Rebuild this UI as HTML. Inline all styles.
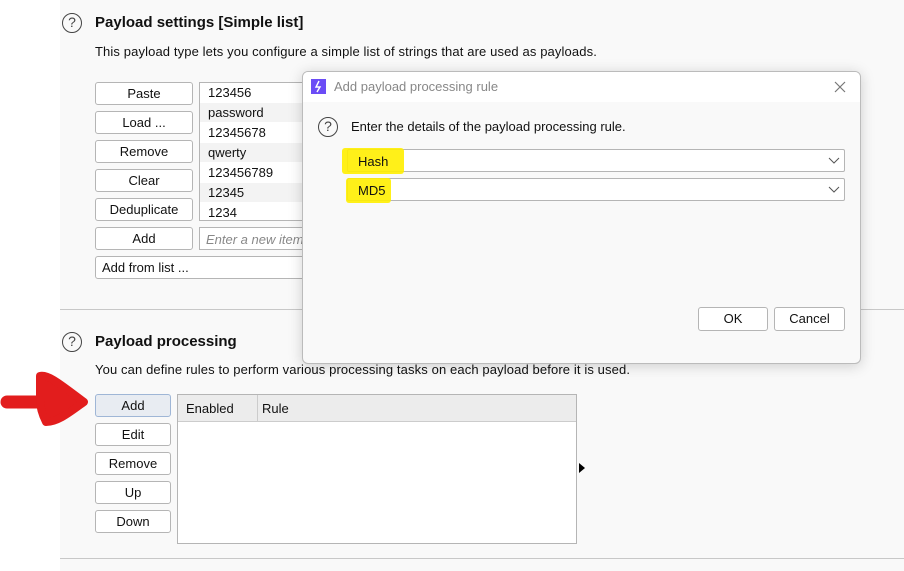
<!DOCTYPE html>
<html><head><style>
body{margin:0;width:904px;height:571px;position:relative;overflow:hidden;background:#fff;font-family:"Liberation Sans",sans-serif;font-size:13px;color:#111}
.a{position:absolute}
.panel{left:60px;top:0;width:844px;height:571px;background:#f9f9f9}
.hr{height:1px;background:#c8c8c8;left:60px;width:844px}
.btn{position:absolute;background:#fff;border:1px solid #b5b5b5;border-radius:3px;box-sizing:border-box;text-align:center;line-height:21px;font-size:13px}
.help{position:absolute;width:20px;height:20px;border:1.6px solid #444;border-radius:50%;box-sizing:border-box;text-align:center;font-size:14px;line-height:17px;color:#444}
.h{font-weight:bold;font-size:15px}
.li{position:absolute;left:208px;font-size:13px}
.combo{position:absolute;left:347px;width:498px;height:23px;border:1px solid #b5b5b5;border-radius:2px;background:#fff;box-sizing:border-box}
.hl{position:absolute;background:#ffee00;border-radius:3px}
</style></head><body>
<div class="a panel"></div>
<div class="a hr" style="top:309px"></div>
<div class="a hr" style="top:558px"></div>

<div class="help" style="left:62px;top:13px">?</div>
<div class="a h" style="left:95px;top:14px">Payload settings [Simple list]</div>
<div class="a" style="left:95px;top:44px;letter-spacing:0.12px">This payload type lets you configure a simple list of strings that are used as payloads.</div>

<div class="btn" style="left:95px;top:82px;width:98px;height:23px">Paste</div>
<div class="btn" style="left:95px;top:111px;width:98px;height:23px">Load ...</div>
<div class="btn" style="left:95px;top:140px;width:98px;height:23px">Remove</div>
<div class="btn" style="left:95px;top:169px;width:98px;height:23px">Clear</div>
<div class="btn" style="left:95px;top:198px;width:98px;height:23px">Deduplicate</div>
<div class="btn" style="left:95px;top:227px;width:98px;height:23px">Add</div>
<div class="a" style="left:199px;top:82px;width:120px;height:139px;border:1px solid #b5b5b5;background:#fff;box-sizing:border-box"></div>
<div class="a" style="left:200px;top:103px;width:110px;height:19px;background:#f3f3f3"></div>
<div class="a" style="left:200px;top:143px;width:110px;height:19px;background:#f3f3f3"></div>
<div class="a" style="left:200px;top:183px;width:110px;height:19px;background:#f3f3f3"></div>
<div class="li" style="top:85px">123456</div>
<div class="li" style="top:105px">password</div>
<div class="li" style="top:125px">12345678</div>
<div class="li" style="top:145px">qwerty</div>
<div class="li" style="top:165px">123456789</div>
<div class="li" style="top:185px">12345</div>
<div class="li" style="top:205px">1234</div>
<div class="a" style="left:199px;top:227px;width:120px;height:23px;border:1px solid #b5b5b5;background:#fff;box-sizing:border-box;color:#888;font-style:italic;padding:4px 6px">Enter a new item</div>
<div class="a" style="left:95px;top:256px;width:230px;height:23px;border:1px solid #b5b5b5;border-radius:3px;background:#fff;box-sizing:border-box;padding:3px 6px">Add from list ...</div>

<div class="help" style="left:62px;top:332px">?</div>
<div class="a h" style="left:95px;top:333px">Payload processing</div>
<div class="a" style="left:95px;top:362px;letter-spacing:0.12px">You can define rules to perform various processing tasks on each payload before it is used.</div>
<div class="btn" style="left:95px;top:394px;width:76px;height:23px;background:#e8ecf2;border-color:#9fb6d6">Add</div>
<div class="btn" style="left:95px;top:423px;width:76px;height:23px">Edit</div>
<div class="btn" style="left:95px;top:452px;width:76px;height:23px">Remove</div>
<div class="btn" style="left:95px;top:481px;width:76px;height:23px">Up</div>
<div class="btn" style="left:95px;top:510px;width:76px;height:23px">Down</div>
<div class="a" style="left:177px;top:394px;width:400px;height:150px;border:1px solid #b5b5b5;background:#fff;box-sizing:border-box">
<div class="a" style="left:0;top:0;width:398px;height:26px;background:#ececec;border-bottom:1px solid #ccc"></div>
<div class="a" style="left:79px;top:0;width:1px;height:26px;background:#ccc"></div>
<div class="a" style="left:8px;top:6px">Enabled</div>
<div class="a" style="left:84px;top:6px">Rule</div>
</div>
<svg class="a" style="left:578px;top:462px" width="8" height="12"><path d="M1 1L7 6L1 11Z" fill="#000"/></svg>

<svg class="a" style="left:0;top:360px" width="95" height="70"><path d="M7 42L42 42" stroke="#e21d1d" stroke-width="13" stroke-linecap="round"/><path d="M40 16C48 14 60 24 84 42C70 52 58 62 46 62C42 54 40 46 40 40Z" stroke="#e21d1d" stroke-width="8" stroke-linejoin="round" fill="#e21d1d"/></svg>

<div class="a" style="left:302px;top:71px;width:559px;height:293px;background:#f9f9f9;border:1px solid #bbb;border-radius:6px;box-sizing:border-box;box-shadow:0 2px 14px rgba(0,0,0,.18);overflow:hidden">
<div class="a" style="left:0;top:0;width:559px;height:30px;background:#fff"></div>
<div class="a" style="left:8px;top:7px;width:15px;height:15px;background:#6b4cf6"></div>
<svg class="a" style="left:8px;top:7px" width="15" height="15"><path d="M8 2L5 8L9 8L6 13" stroke="#fff" stroke-width="1.4" fill="none"/></svg>
<div class="a" style="left:31px;top:7px;color:#888">Add payload processing rule</div>
<svg class="a" style="left:530px;top:8px" width="14" height="14"><path d="M2 2L12 12M12 2L2 12" stroke="#777" stroke-width="1.2"/></svg>
</div>
<div class="help" style="left:318px;top:117px">?</div>
<div class="a" style="left:351px;top:119px">Enter the details of the payload processing rule.</div>
<div class="combo" style="top:149px"></div>
<div class="combo" style="top:178px"></div>
<div class="hl" style="left:342px;top:148px;width:62px;height:26px;opacity:.9"></div>
<div class="hl" style="left:346px;top:178px;width:45px;height:25px;opacity:.9"></div>
<div class="a" style="left:358px;top:154px">Hash</div>
<div class="a" style="left:358px;top:183px">MD5</div>
<svg class="a" style="left:828px;top:157px" width="12" height="8"><path d="M1 1L6 6L11 1" stroke="#555" fill="none"/></svg>
<svg class="a" style="left:828px;top:186px" width="12" height="8"><path d="M1 1L6 6L11 1" stroke="#555" fill="none"/></svg>
<div class="btn" style="left:698px;top:307px;width:70px;height:24px">OK</div>
<div class="btn" style="left:774px;top:307px;width:71px;height:24px">Cancel</div>
</body></html>
